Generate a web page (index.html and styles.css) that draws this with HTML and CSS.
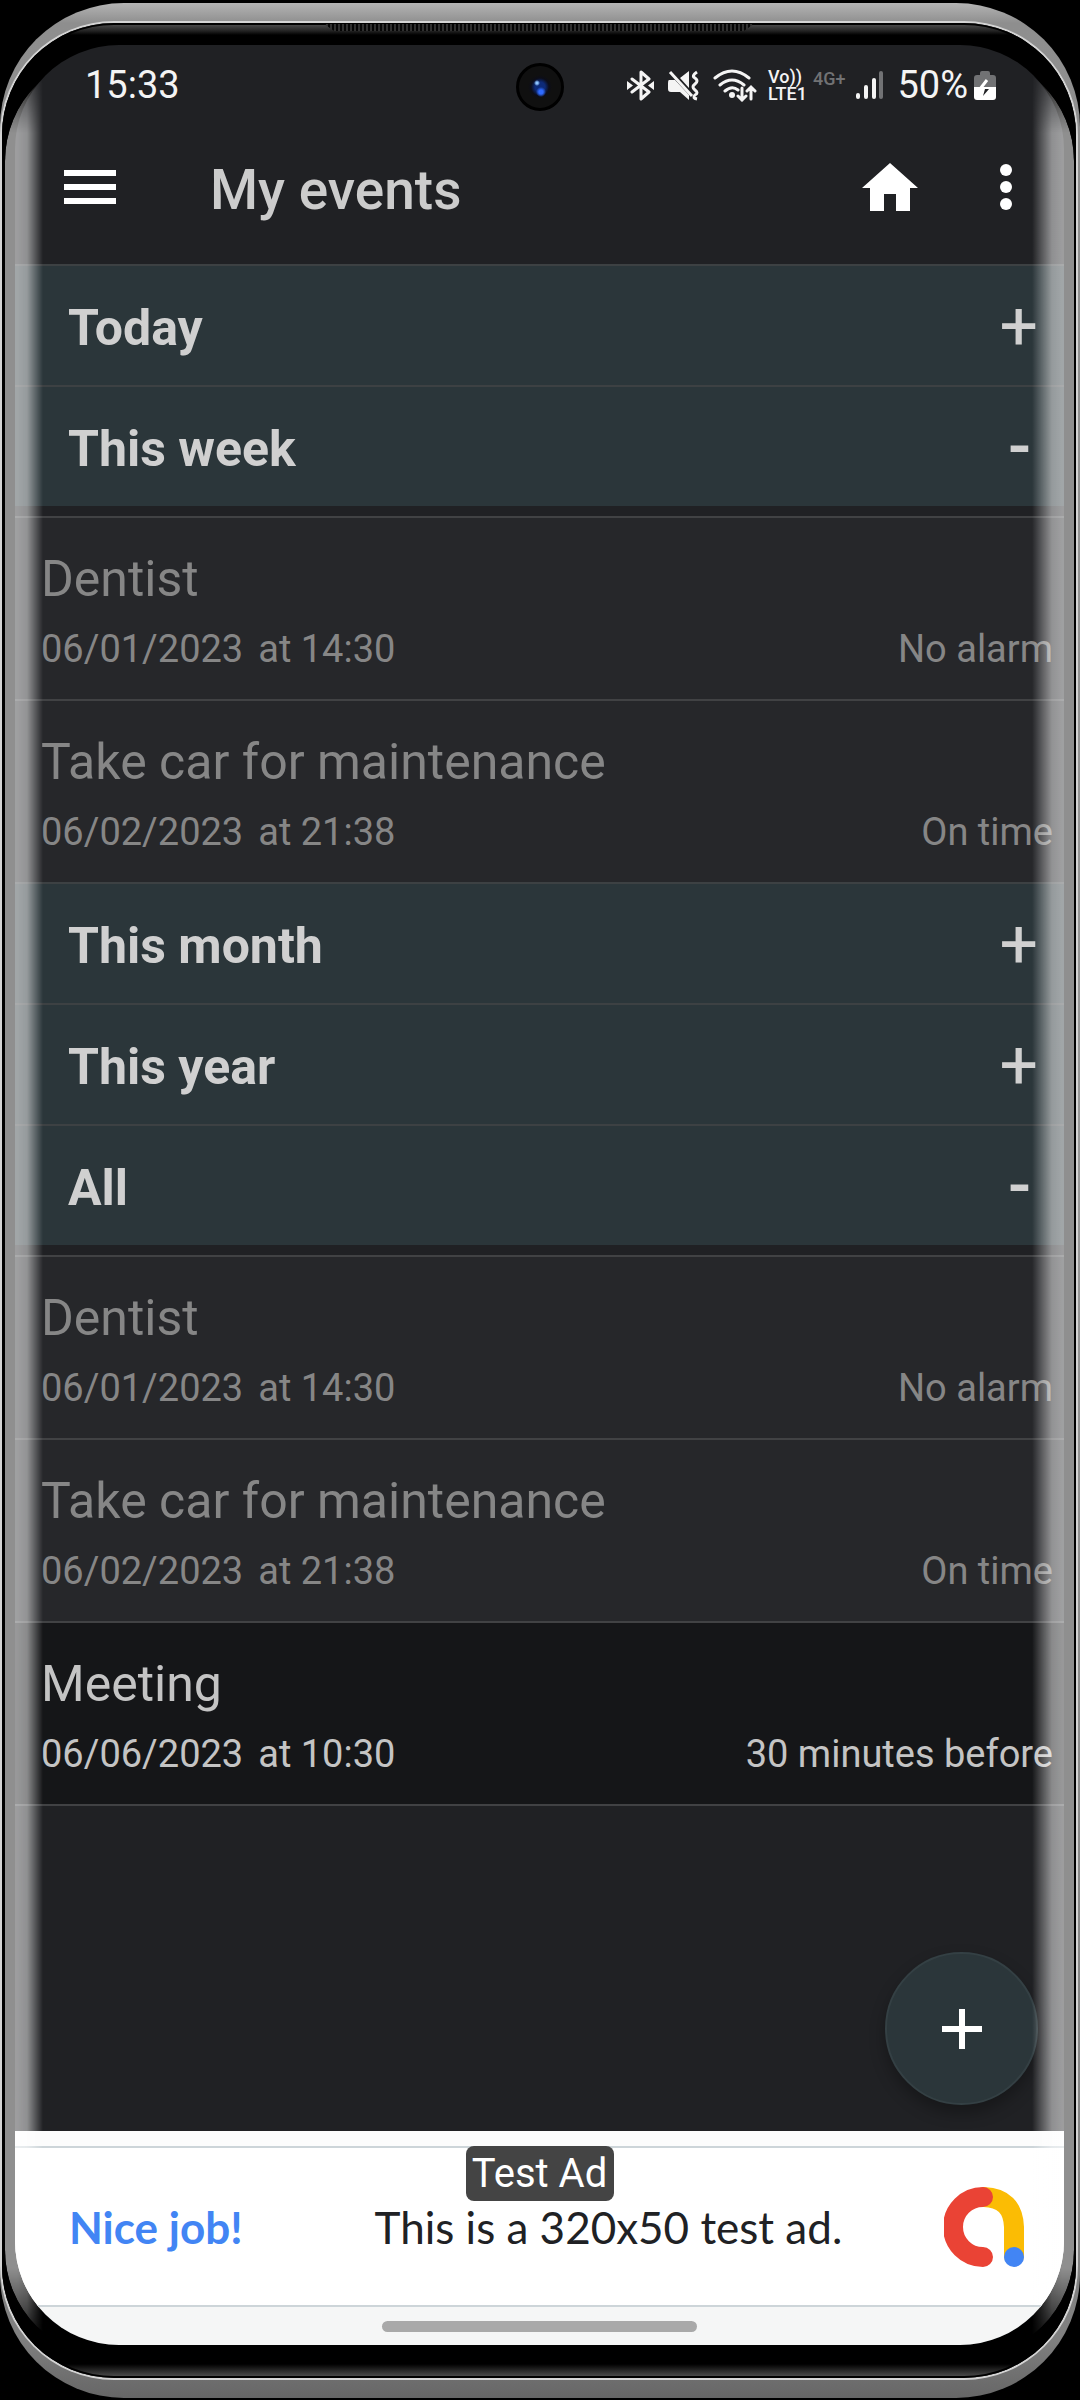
FILE: index.html
```html
<!DOCTYPE html>
<html lang="en">
<head>
	<meta charset="UTF-8">
	<meta name="viewport" content="width=device-width, initial-scale=1">
	<title>My events</title>
	<link rel="stylesheet" href="styles.css">
</head>
<body>
	<div class="phone">
		<div class="glass">
			<div class="speaker"></div>
			<div class="screen">
				<div class="camera"></div>
				<div class="status">
					<span class="time">15:33</span>
					<div class="statusIcons">
						<svg width="27" height="31" viewBox="0 0 27 31" fill="none" stroke="#f4f4f4" stroke-width="3" stroke-linejoin="round" stroke-linecap="round">
							<path d="M5 9l17 13-8 7V2l8 7L5 22"/>
							<path d="M0 11l6 4.500-6 4.500zM27 11l-6 4.500 6 4.500z" fill="#f4f4f4" stroke="none"/>
						</svg>
						<svg width="31" height="31" viewBox="0 0 31 31" fill="#f4f4f4">
							<path d="M1 10h6l14 15v5l-9-8H3q-3 0-3-3v-6q0-3 1-3zM12 8l9-7v17z"/>
							<path d="M2 2l22 24" fill="none" stroke="#f4f4f4" stroke-width="3"/>
							<path d="M29 2q-6 4-2 6 4 3 0 6-4 3 0 6 4 3 0 5-3 3 2 4" fill="none" stroke="#f4f4f4" stroke-width="3"/>
						</svg>
						<svg class="wifi" width="44" height="33" viewBox="0 0 44 33" fill="none" stroke="#f4f4f4" stroke-width="3" stroke-linecap="round">
							<path d="M2 9q17-14 34 0M7 16q12-10 24 0M12 22q7-6 13-1"/>
							<circle cx="19" cy="26" r="3" fill="#f4f4f4" stroke="none"/>
							<path d="M29 19v12M25 27l4 4 4-4M38 30V18M34 22l4-4 4 4"/>
						</svg>
						<span class="volte"><span>Vo))</span><span>LTE1</span></span>
						<span class="net">4G+</span>
						<svg width="27" height="30" viewBox="0 0 27 30" fill="#f4f4f4">
							<rect x="0" y="23" width="4" height="6" rx="2"/>
							<rect x="8" y="15" width="4" height="14" rx="2"/>
							<rect x="16" y="8" width="4" height="21" rx="2"/>
							<rect x="23" y="1" width="4" height="28" rx="2" fill="#717274"/>
						</svg>
						<span class="percent">50%</span>
						<svg width="22" height="31" viewBox="0 0 22 31">
							<path d="M6 3q0-2 2-2h6q2 0 2 2v2h3q3 0 3 3v11H0V8q0-3 3-3h3z" fill="#717274"/>
							<path d="M0 17h22v10q0 3-3 3H3q-3 0-3-3z" fill="#fff"/>
							<path d="M13 10l-7 9h5l-1 8" fill="none" stroke="#fff" stroke-width="3"/>
							<path d="M11 19h4l-6 7z" fill="#202124"/>
						</svg>
					</div>
				</div>

				<div class="toolbar">
					<button class="iconBtn" aria-label="Menu">
						<svg width="52" height="34" viewBox="0 0 52 34" fill="#fff"><path d="M0 0h52v6H0zM0 14h52v6H0zM0 28h52v6H0z"/></svg>
					</button>
					<h1>My events</h1>
					<button class="iconBtn" aria-label="Home">
						<svg width="56" height="48" viewBox="0 0 56 48" fill="#fff"><path d="M28 0l28 25h-8v23H34V31H22v17H8V25H0z"/></svg>
					</button>
					<button class="iconBtn more" aria-label="More">
						<svg width="12" height="46" viewBox="0 0 12 46" fill="#fff"><circle cx="6" cy="6" r="6"/><circle cx="6" cy="23" r="6"/><circle cx="6" cy="40" r="6"/></svg>
					</button>
				</div>

				<div class="content">
					<h2><button class="group" aria-expanded="false"><span>Today</span><span class="sign">+</span></button></h2>
					<h2><button class="group" aria-expanded="true"><span>This week</span><span class="sign minus">-</span></button></h2>
					<ul class="events">
						<li class="past">
							<div class="name">Dentist</div>
							<div class="info"><span class="date">06/01/2023</span><span>at 14:30</span><span class="alarm">No alarm</span></div>
						</li>
						<li class="past">
							<div class="name">Take car for maintenance</div>
							<div class="info"><span class="date">06/02/2023</span><span>at 21:38</span><span class="alarm">On time</span></div>
						</li>
					</ul>
					<h2><button class="group" aria-expanded="false"><span>This month</span><span class="sign">+</span></button></h2>
					<h2><button class="group" aria-expanded="false"><span>This year</span><span class="sign">+</span></button></h2>
					<h2><button class="group" aria-expanded="true"><span>All</span><span class="sign minus">-</span></button></h2>
					<ul class="events last">
						<li class="past">
							<div class="name">Dentist</div>
							<div class="info"><span class="date">06/01/2023</span><span>at 14:30</span><span class="alarm">No alarm</span></div>
						</li>
						<li class="past">
							<div class="name">Take car for maintenance</div>
							<div class="info"><span class="date">06/02/2023</span><span>at 21:38</span><span class="alarm">On time</span></div>
						</li>
						<li>
							<div class="name">Meeting</div>
							<div class="info"><span class="date">06/06/2023</span><span>at 10:30</span><span class="alarm">30 minutes before</span></div>
						</li>
					</ul>
					<button class="fab" aria-label="Add event">
						<svg width="40" height="40" viewBox="0 0 40 40" fill="#fff"><path d="M17 0h6v17h17v6H23v17h-6V23H0v-6h17z"/></svg>
					</button>
				</div>

				<div class="adWrap">
					<div class="ad">
						<span class="badge">Test Ad</span>
						<a href="#" class="nice">Nice job!</a>
						<span class="adText">This is a 320x50 test ad.</span>
						<svg width="80" height="80" viewBox="0 0 80 80" fill="none" stroke-width="20" stroke-linecap="round">
							<path d="M40 10q29 1 30 30v29" stroke="#fbbc04"/>
							<path d="M39 10a30 30 0 0 0 0 60" stroke="#ea4335"/>
							<circle cx="70" cy="70" r="10" fill="#4285f4"/>
						</svg>
					</div>
				</div>
				<div class="nav"><span></span></div>
			</div>
		</div>
	</div>
</body>
</html>
```
FILE: styles.css
```css
* {
	box-sizing: border-box;
}
body {
	margin: 0;
	padding: 3px 0 2px;
	background: #000;
	color: #d0d0d0;
	font-family: Roboto, "Liberation Sans", sans-serif;
}
h1, h2, ul {
	margin: 0;
	padding: 0;
}
ul {
	list-style: none;
}
button {
	margin: 0;
	padding: 0;
	border: none;
	background: none;
	color: inherit;
	font-family: inherit;
}
svg {
	display: block;
	flex: none;
}

/* phone body */
.phone {
	display: flex;
	min-height: calc(100vh - 5px);
	padding: 20px 4px 20px 2px;
	border-radius: 124px;
	background: linear-gradient(#b4b4b4, #8e8e8e 20px, #999 50%, #808080 calc(100% - 60px), #666);
}
.glass {
	position: relative;
	display: flex;
	flex: 1;
	padding: 22px 12px 33px 13px;
	border-radius: 112px;
	background: linear-gradient(#555, #222 8px, #000 12px, #000 calc(100% - 14px), #555);
	box-shadow: 0 0 0 2px #d4d4d4, inset 0 0 0 2px #000;
	overflow: hidden;
}
/* light on the curved edges */
.glass::after {
	content: "";
	position: absolute;
	inset: 30px 2px 20px 3px;
	border-radius: 108px;
	background:
		linear-gradient(90deg, rgba(255,255,255,.56) 12px, rgba(255,255,255,.5) 22px, transparent 38px),
		linear-gradient(270deg, rgba(255,255,255,.56) 12px, rgba(255,255,255,.5) 22px, transparent 42px);
	-webkit-mask-image: linear-gradient(transparent, #000 80px, #000 calc(100% - 90px), transparent);
	mask-image: linear-gradient(transparent, #000 80px, #000 calc(100% - 90px), transparent);
	pointer-events: none;
}
.speaker {
	position: absolute;
	top: 1px;
	left: 30%;
	right: 30%;
	height: 7px;
	background: repeating-linear-gradient(90deg, #060606 0 2px, #303030 2px 4px);
	clip-path: polygon(0 0, 100% 0, calc(100% - 10px) 100%, 10px 100%);
}
.screen {
	position: relative;
	display: flex;
	flex-direction: column;
	flex: 1;
	min-width: 0;
	border-radius: 104px;
	background: #202124;
	overflow: hidden;
}
.camera {
	position: absolute;
	top: 18px;
	left: 50%;
	width: 48px;
	height: 48px;
	margin-left: -24px;
	border: 3px solid #000;
	border-radius: 50%;
	background:
		radial-gradient(circle at 18px 17px, #8ec5ff 1px, transparent 3px),
		radial-gradient(circle at 22px 26px, #2f6bff 2px, transparent 5px),
		radial-gradient(circle, #0d2a78 5px, #0c0d18 9px, #101010 12px);
}

/* status bar */
.status {
	display: flex;
	justify-content: space-between;
	align-items: center;
	height: 68px;
	padding: 12px 68px 0 70px;
	color: #f4f4f4;
	font-size: 38px;
}
.statusIcons {
	display: flex;
	align-items: center;
	gap: 14px;
}
.wifi {
	margin-right: -3px;
}
.volte {
	display: flex;
	flex-direction: column;
	width: 36px;
	font-size: 18px;
	font-weight: 500;
	line-height: 17px;
}
.net {
	margin: -14px -3px 0 -5px;
	color: #717274;
	font-size: 18px;
	font-weight: 500;
}
.percent {
	margin-right: -8px;
}

/* toolbar */
.toolbar {
	display: flex;
	align-items: center;
	height: 151px;
	padding: 0 52px 4px 49px;
}
h1 {
	flex: 1;
	margin-left: 94px;
	padding-top: 6px;
	color: #ccc;
	font-size: 55px;
	font-weight: 500;
}
.iconBtn {
	padding: 12px 0;
}
.more {
	margin-left: 82px;
}

/* list */
.content {
	position: relative;
	flex: 1;
}
.group {
	display: flex;
	justify-content: space-between;
	align-items: center;
	width: 100%;
	height: 121px;
	padding: 4px 26px 0 53px;
	border-top: 2px solid #3d4143;
	background: #2b363a;
	color: #d0d0d0;
	font-size: 50px;
	font-weight: 700;
	line-height: 60px;
	text-align: left;
}
.sign {
	padding-bottom: 4px;
	font-size: 68px;
	font-weight: 400;
}
.minus {
	margin-right: 7px;
	font-weight: 500;
}
.events {
	padding-top: 10px;
}
.events li {
	padding: 33px 11px 28px 26px;
	border-top: 2px solid #414244;
	background: #151618;
	color: #c4c4c4;
}
.events .past {
	background: #26272a;
	color: #868686;
}
.last {
	border-bottom: 2px solid #414244;
}
.name {
	margin-bottom: 20px;
	font-size: 50px;
	line-height: 56px;
}
.info {
	display: flex;
	font-size: 38px;
	line-height: 44px;
}
.date {
	margin-right: 15px;
}
.alarm {
	margin-left: auto;
}
.fab {
	position: absolute;
	right: 26px;
	bottom: 26px;
	display: flex;
	justify-content: center;
	align-items: center;
	width: 153px;
	height: 153px;
	border: 2px solid #344044;
	border-radius: 50%;
	background: #2b363a;
	box-shadow: 0 8px 16px rgba(0,0,0,.3);
}

/* ad banner */
.adWrap {
	padding-top: 15px;
	background: #fcfcfc;
}
.ad {
	position: relative;
	display: flex;
	align-items: center;
	height: 161px;
	padding: 0 40px 0 54px;
	border: solid #cdd5d9;
	border-width: 2px 0;
	background: #fff;
	font-family: Lato, Roboto, sans-serif;
	font-size: 44px;
}
.ad svg {
	margin-left: auto;
}
.badge {
	position: absolute;
	top: -2px;
	left: 50%;
	width: 148px;
	margin-left: -74px;
	border-radius: 8px;
	background: #444;
	color: #fff;
	font-family: Roboto, sans-serif;
	font-size: 40px;
	line-height: 55px;
	text-align: center;
}
.nice {
	margin-right: 132px;
	color: #4285f4;
	font-weight: 700;
	text-decoration: none;
}
.adText {
	color: #202124;
}
.nav {
	display: flex;
	justify-content: center;
	align-items: center;
	height: 38px;
	background: #f5f6f6;
}
.nav span {
	width: 30%;
	height: 11px;
	border-radius: 6px;
	background: #a9a9a9;
}
```
